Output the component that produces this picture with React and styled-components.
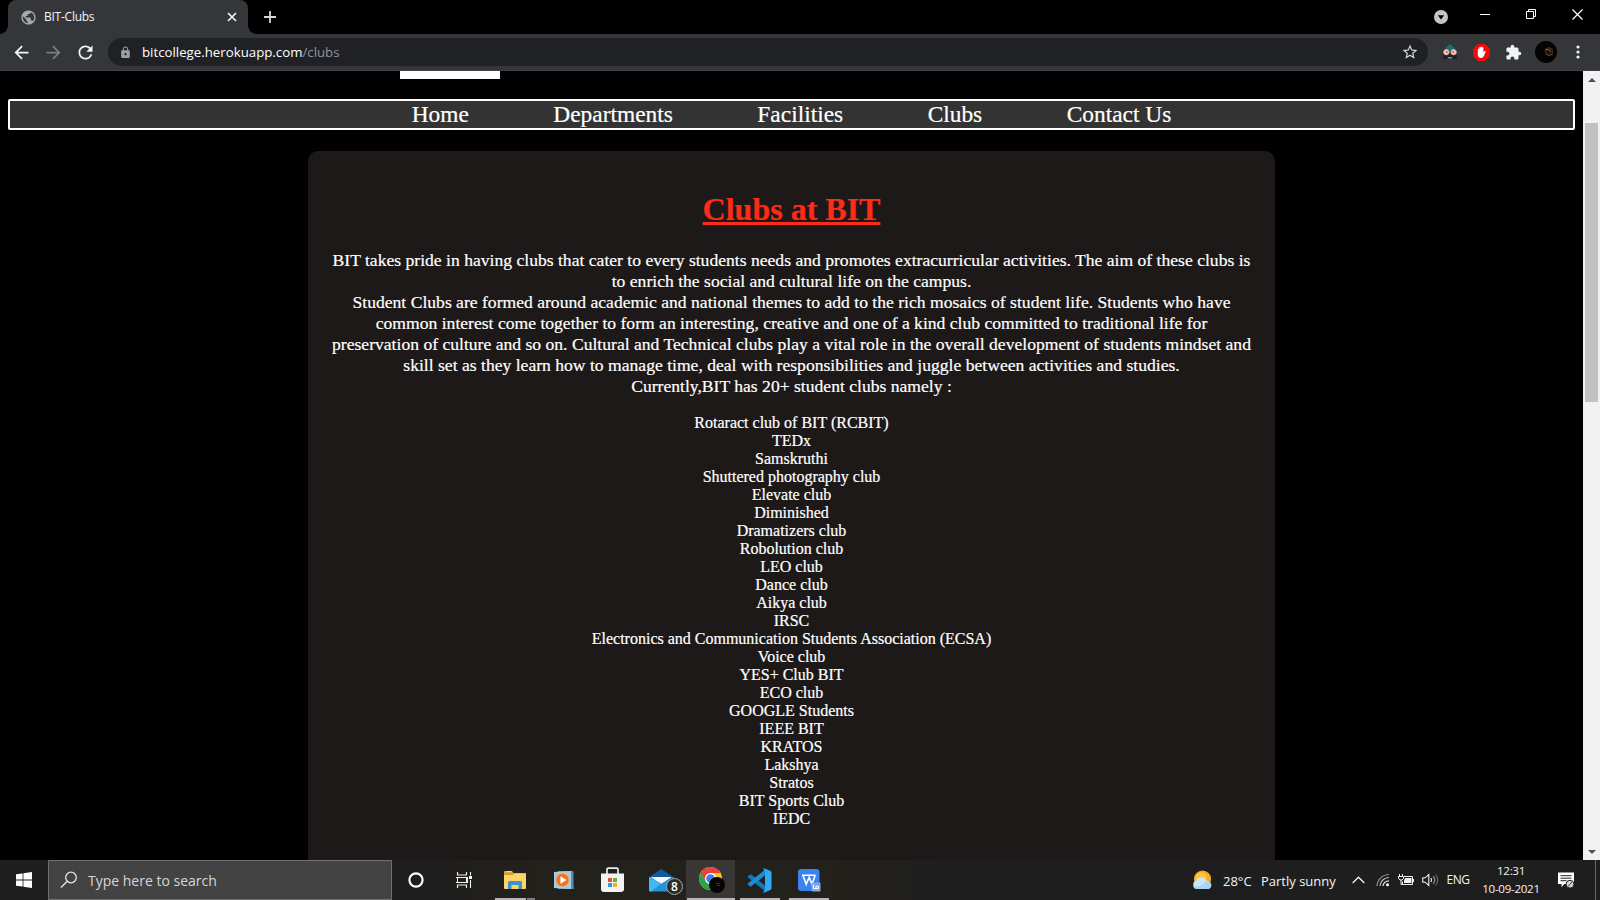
import React from "react";
import styled, { createGlobalStyle } from "styled-components";
import {
  MdArrowBack,
  MdArrowForward,
  MdRefresh,
  MdLock,
  MdStarBorder,
  MdExtension,
  MdPublic,
} from "react-icons/md";

const GlobalStyle = createGlobalStyle`
  html, body { margin: 0; background: #000; overflow: hidden; }
  *, *::before, *::after { box-sizing: border-box; }
  svg { display: block; flex: none; }
`;

const ui = `"Open Sans", "Noto Sans", sans-serif`;

const Screen = styled.div`
  display: flex;
  flex-direction: column;
  width: 1600px;
  height: 900px;
  background: #000;
  overflow: hidden;
`;

/* ---------- browser chrome ---------- */

const TabStrip = styled.div`
  display: flex;
  height: 34px;
  flex: none;
  padding-left: 8px;
  background: #000;
`;

const Tab = styled.div`
  position: relative;
  display: flex;
  align-items: center;
  width: 240px;
  height: 34px;
  padding: 0 9px 0 12px;
  border-radius: 8px 8px 0 0;
  background: #35363a;
  color: #a6a9ad;

  &::before,
  &::after {
    content: "";
    position: absolute;
    bottom: 0;
    width: 8px;
    height: 8px;
  }
  &::before {
    left: -8px;
    background: radial-gradient(circle at 0 0, #000 7.5px, #35363a 8px);
  }
  &::after {
    right: -8px;
    background: radial-gradient(circle at 100% 0, #000 7.5px, #35363a 8px);
  }
`;

const TabTitle = styled.span`
  flex: 1;
  margin-left: 7px;
  padding-bottom: 1px;
  color: #f4f5f6;
  font: 12px/17px ${ui};
  letter-spacing: -0.25px;
`;

const NewTab = styled.div`
  display: flex;
  align-items: center;
  justify-content: center;
  width: 28px;
  margin-left: 8px;
`;

const WindowControls = styled.div`
  display: flex;
  margin-left: auto;
`;

const ControlButton = styled.div`
  display: flex;
  justify-content: center;
  width: ${(p) => p.$width || 46}px;
  padding-top: ${(p) => p.$top || 9}px;
`;

const Toolbar = styled.div`
  display: flex;
  align-items: center;
  height: 37px;
  flex: none;
  padding: 0 6px;
  background: #35363a;
  border-bottom: 1px solid #414246;
`;

const ToolButton = styled.div`
  display: flex;
  align-items: center;
  justify-content: center;
  width: 32px;
  height: 32px;
  padding-right: 1px;
  color: ${(p) => p.$color || "#f1f3f4"};
`;

const Omnibox = styled.div`
  display: flex;
  align-items: center;
  width: 1320px;
  height: 28px;
  margin: 0 6px;
  padding: 0 9px 0 11px;
  border-radius: 14px;
  background: #202124;
  color: #9aa0a6;
`;

const Url = styled.span`
  flex: 1;
  margin-left: 10px;
  font: 13.25px/20px ${ui};
  color: #8f9397;
  b {
    font-weight: 400;
    color: #fff;
  }
`;

/* ---------- page ---------- */

const Viewport = styled.div`
  display: flex;
  height: 789px;
  flex: none;
  overflow: hidden;
`;

const Page = styled.main`
  display: flex;
  flex-direction: column;
  width: 1583px;
  padding: 0 8px;
  color: #fff;
  font-family: "Liberation Serif", "Times New Roman", serif;
  -webkit-text-stroke: 0.2px currentColor;
`;

const LogoEdge = styled.div`
  width: 100px;
  height: 8px;
  flex: none;
  margin-left: 392px;
  background: #fff;
`;

const NavBar = styled.nav`
  display: flex;
  justify-content: center;
  gap: 84.5px;
  height: 31px;
  flex: none;
  margin-top: 20px;
  border: 2px solid #fff;
  border-radius: 2px;
  background: #333;
`;

const NavLink = styled.a`
  color: #fff;
  font-size: 23.4px;
  line-height: 27px;
`;

const Card = styled.section`
  width: 967px;
  flex: 1;
  margin: 21px auto 0;
  padding: 40px 20px 0;
  border-radius: 10px 10px 0 0;
  background: #1d1918;
  text-align: center;
`;

const Title = styled.h1`
  margin: 0;
  color: #ff2a17;
  font-size: 32px;
  line-height: 37px;
  text-decoration: underline;
  text-decoration-thickness: 3px;
  text-underline-offset: 2px;
  text-decoration-skip-ink: none;
`;

const Intro = styled.div`
  margin: 22px 0 17px;
  font-size: 17.6px;
  line-height: 21px;
  white-space: nowrap;
`;

const ClubList = styled.ul`
  margin: 0;
  padding: 0;
  list-style: none;
  font-size: 16px;
  line-height: 18px;
`;

const Scrollbar = styled.div`
  display: flex;
  flex-direction: column;
  align-items: center;
  width: 17px;
  background: #f1f1f1;
`;

const ScrollArrow = styled.div`
  display: flex;
  align-items: center;
  justify-content: center;
  width: 17px;
  height: 17px;
`;

const ScrollTrack = styled.div`
  flex: 1;
  padding-top: 35px;
`;

const ScrollThumb = styled.div`
  width: 13px;
  height: 279px;
  background: #c1c1c1;
`;

/* ---------- taskbar ---------- */

const Taskbar = styled.footer`
  display: flex;
  height: 40px;
  flex: none;
  background: linear-gradient(90deg, #1f1f20 0, #1f1e1e 440px, #23211b 540px, #23211b 820px, #1e1e1f 960px);
  color: #f4f4f4;
  font-family: ${ui};
`;

const TaskCell = styled.div`
  display: flex;
  align-items: center;
  justify-content: center;
  width: ${(p) => p.$width || 48}px;
`;

const SearchBox = styled.div`
  display: flex;
  align-items: center;
  width: 344px;
  padding-left: 11px;
  border: 1px solid #707070;
  background: #434343;
  color: #d6d6d6;
  font-size: 14px;
  line-height: 20px;
`;

const SearchText = styled.span`
  margin-left: 10px;
  padding-top: 2px;
`;

const Apps = styled.div`
  display: flex;
  margin-left: 2px;
`;

const AppButton = styled.div`
  position: relative;
  display: flex;
  align-items: center;
  justify-content: center;
  width: 49px;
  padding-left: ${(p) => p.$nudge || 0}px;
  background: ${(p) => (p.$active ? "#383735" : "transparent")};
`;

const RunningMark = styled.i`
  position: absolute;
  left: ${(p) => p.$left}px;
  bottom: 0;
  width: ${(p) => p.$width}px;
  height: 2px;
  background: ${(p) => (p.$dim ? "#7f7c7d" : "#b9b5b6")};
`;

const MailCount = styled.span`
  position: absolute;
  left: 29px;
  top: 18px;
  width: 17px;
  height: 17px;
  border: 1px solid #a9a9a9;
  border-radius: 50%;
  background: #2b2b2b;
  color: #fff;
  font-size: 12px;
  font-weight: 600;
  line-height: 15px;
  text-align: center;
`;

const Tray = styled.div`
  display: flex;
  align-items: center;
  margin-left: auto;
`;

const Weather = styled.div`
  display: flex;
  align-items: center;
  width: 153px;
  font-size: 13px;
  line-height: 18px;
`;

const Temp = styled.span`
  width: 38px;
  margin-left: 10px;
  padding-top: 2px;
`;

const Condition = styled.span`
  padding-top: 2px;
`;

const Language = styled.span`
  width: 32px;
  font-size: 12px;
  line-height: 16px;
  letter-spacing: -0.5px;
  text-align: center;
`;

const Clock = styled.div`
  width: 74px;
  font-size: 11.6px;
  line-height: 18px;
  letter-spacing: -0.3px;
  text-align: center;
`;

const DesktopEdge = styled.div`
  align-self: stretch;
  width: 15px;
  background: linear-gradient(#6a6a6a, #6a6a6a) 10px 0 / 1px 100% no-repeat;
`;

/* ---------- icons ---------- */

const CloseTabIcon = () => (
  <svg width="14" height="14" stroke="#f1f3f4" strokeWidth="1.7">
    <path d="M3 3l8 8M11 3l-8 8" />
  </svg>
);

const PlusIcon = () => (
  <svg width="14" height="14" stroke="#d5d7da" strokeWidth="1.8">
    <path d="M7 1v12M1 7h12" />
  </svg>
);

const TabSearchIcon = () => (
  <svg width="14" height="14">
    <circle cx="7" cy="7" r="7" fill="#c4c5c6" />
    <path d="M3.8 5.2h6.4L7 9.4z" fill="#000" />
  </svg>
);

const MinimizeIcon = () => (
  <svg width="10" height="11" fill="#fff">
    <path d="M0 5h10v1H0z" />
  </svg>
);

const RestoreIcon = () => (
  <svg width="11" height="11" fill="none" stroke="#fff">
    <path d="M.5 2.5h7v7h-7zM2.5 2.5v-2h7v7h-2" />
  </svg>
);

const CloseIcon = () => (
  <svg width="11" height="11" stroke="#fff" strokeWidth="1.2">
    <path d="M.5.5l10 10M10.5.5l-10 10" />
  </svg>
);

const OwlIcon = () => (
  <svg width="16" height="16">
    <path d="M8 0l4 3.6 1 3.400H3l1-3.400z" fill="#16717c" />
    <path d="M2 9h12l1 6H1z" fill="#15232c" />
    <path d="M5.500 13h5l-.6 1.600H6.100z" fill="#7b8f98" />
    <circle cx="4.400" cy="8.200" r="2.700" fill="#f8ebe4" stroke="#d98f80" strokeWidth="1" />
    <circle cx="11.600" cy="8.200" r="2.700" fill="#f8ebe4" stroke="#d98f80" strokeWidth="1" />
    <circle cx="4.700" cy="8.200" r="1.100" fill="#d4492f" />
    <circle cx="11.300" cy="8.200" r="1.100" fill="#d4492f" />
  </svg>
);

const BlockerIcon = () => (
  <svg width="17" height="17">
    <path d="M5 0h7l5 5v7l-5 5H5l-5-5V5z" fill="#f50a0a" />
    <path
      d="M4.800 8.800V5.200a.7.7 0 011.400 0V3.800a.7.700 0 011.400 0v-.6a.7.700 0 011.400 0v.6a.7.700 0 011.400 0v4.600l1-1.200c.600-.6 1.600-.1 1.200.7l-1.500 3.600c-.6 1.500-1.600 2.500-3.100 2.500-2 0-3.200-1.400-3.200-3.200z"
      fill="#fff"
    />
  </svg>
);

const AvatarIcon = () => (
  <svg width="22" height="22">
    <circle cx="11" cy="11" r="11" fill="#050403" />
    <circle cx="14" cy="10.500" r="3.800" fill="#20150e" stroke="#4d3422" strokeWidth="1" />
    <path d="M10.500 8.500l3.500.4 2 1.500" stroke="#94602f" fill="none" />
    <path d="M11 13l3 1.500 3.500-1" stroke="#39413f" fill="none" />
  </svg>
);

const MenuDotsIcon = () => (
  <svg width="4" height="14" fill="#f1f3f4">
    <circle cx="2" cy="2" r="1.600" />
    <circle cx="2" cy="7" r="1.600" />
    <circle cx="2" cy="12" r="1.600" />
  </svg>
);

const ScrollUpIcon = () => (
  <svg width="8" height="4" fill="#505050">
    <path d="M0 4l4-4 4 4z" />
  </svg>
);

const ScrollDownIcon = () => (
  <svg width="8" height="4" fill="#505050">
    <path d="M0 0l4 4 4-4z" />
  </svg>
);

const WindowsIcon = () => (
  <svg width="16" height="16" fill="#fff">
    <path d="M0 2.300l6.600-.9v6.200H0zM7.400 1.250L16 0v7.600H7.400zM0 8.400h6.600v6.200L0 13.700zM7.400 8.400H16V16l-8.600-1.200z" />
  </svg>
);

const SearchIcon = () => (
  <svg width="18" height="18" fill="none" stroke="#e6e6e6" strokeWidth="1.300">
    <circle cx="11" cy="6.500" r="5.300" />
    <path d="M7.200 10.300L1 16.500" />
  </svg>
);

const CortanaIcon = () => (
  <svg width="16" height="16" fill="none" stroke="#fff" strokeWidth="2.100">
    <circle cx="8" cy="8" r="6.600" />
  </svg>
);

const TaskViewIcon = () => (
  <svg width="17" height="16" fill="none" stroke="#f2f2f2" strokeWidth="1.100">
    <path d="M1.500 0v3h9V0M1.500 16v-3h9v3M0 5.500h11.500v5H0M1.500 5.500v5M10.500 5.500v5M14.500 0v3.500M14.500 8v8" />
    <path d="M13 4h3v3h-3z" fill="#f2f2f2" stroke="none" />
  </svg>
);

const ExplorerIcon = () => (
  <svg width="22" height="20">
    <path d="M0 1.500Q0 1 .6 1H8l1.500 2H21q1 0 1 1v3H0z" fill="#d99f25" />
    <path d="M2 1.700h5.500" stroke="#f7e3a5" />
    <path d="M0 5h9l1.500-1.500H22V18q0 1-1 1H1q-1 0-1-1z" fill="#fbd568" />
    <path d="M4 19v-6.500Q4 11 5.500 11h11q1.500 0 1.500 1.500V19h-3.500v-4h-7v4z" fill="#3f8fd3" />
  </svg>
);

const MediaPlayerIcon = () => (
  <svg width="20" height="20">
    <path d="M4 1h15v15l1 3H4z" fill="#5f9fc4" />
    <path d="M0 2l17-1v18L0 18z" fill="#a9cbdc" />
    <path d="M17 1l2.500 1v17L17 19z" fill="#4d8fb8" />
    <circle cx="8.500" cy="10" r="6.700" fill="#e9762b" stroke="#f4b586" strokeWidth=".8" />
    <path d="M6.500 6.200l6 3.800-6 3.800z" fill="#fff" />
  </svg>
);

const StoreIcon = () => (
  <svg width="24" height="26">
    <path d="M6 9V2.500Q6 1.200 7.300 1.200h8.400Q17 1.200 17 2.500V9" fill="none" stroke="#eee" strokeWidth="1.700" />
    <path d="M0 6.500h23V22q0 3-3 3H3q-3 0-3-3z" fill="#f3f3f3" />
    <path d="M7 11h4v4H7z" fill="#e8502f" />
    <path d="M12 11h4v4h-4z" fill="#7aac2c" />
    <path d="M7 16h4v4H7z" fill="#2f9be0" />
    <path d="M12 16h4v4h-4z" fill="#efb325" />
  </svg>
);

const MailIcon = () => (
  <svg width="25" height="23">
    <path d="M0 8L12.200 0l12.300 8v4H0z" fill="#14599c" />
    <path d="M2 8h20.500L12.200 15.500z" fill="#f5f8fa" />
    <path d="M0 8l12.200 6.500L24.500 8v13q0 1.500-1.500 1.500H1.500Q0 22.500 0 21z" fill="#2394dc" />
    <path d="M2 8h20.500L12.200 14.500z" fill="#f5f8fa" />
    <path d="M0 8l12.200 6.500L2 22.500h-.5Q0 22.500 0 21z" fill="#45b8f0" />
  </svg>
);

const ChromeIcon = () => (
  <svg width="26" height="26">
    <circle cx="11.500" cy="11.500" r="11.500" fill="#f6c81f" />
    <path d="M1.500 5.800A11.500 11.500 0 0121.500 6H11.500L6.300 14.300z" fill="#e2453c" />
    <path d="M1.500 5.800a11.500 11.500 0 009.800 17.200l4.700-8.500-9.400-.2z" fill="#2da14e" />
    <circle cx="11.500" cy="11.500" r="5.500" fill="#fff" />
    <circle cx="11.500" cy="11.500" r="4.300" fill="#3c7fe8" />
    <circle cx="18" cy="18" r="8" fill="#080605" />
    <path d="M17 16.500h3.500M18 18.500h3" stroke="#4a2f1d" />
  </svg>
);

const CodeIcon = () => (
  <svg width="25" height="25">
    <path d="M1 8.200l2-1.600q.6-.4 1.200 0L18.500 18v5.500L1 9.500q-.7-.7 0-1.300z" fill="#1478bd" />
    <path d="M1 16.600l2 1.700q.6.400 1.200 0L18.500 7V1.200L1 15.300q-.7.700 0 1.300z" fill="#1b8bd6" />
    <path d="M17.800.4L23.500 3q1 .5 1 1.500v15.800q0 1-1 1.500l-5.700 2.800q-1 .3-1.600-.6L18 22V3l-1.800-2q.6-.9 1.600-.6z" fill="#2fa9f3" />
  </svg>
);

const WpsIcon = () => (
  <svg width="23" height="23">
    <rect width="21.500" height="22" rx="3" fill="#3b82ee" />
    <path d="M4 6.200h13.500M5 6.500l3.200 8.800 3-7 2.800 7 3.200-9" fill="none" stroke="#fff" strokeWidth="1.600" />
    <rect x="13.500" y="13.500" width="9" height="9" rx="1" fill="#7ba8ee" />
    <path d="M15.500 16v3.500h5V17.300h-2.500v2" fill="none" stroke="#fff" />
  </svg>
);

const WeatherIcon = () => (
  <svg width="21" height="20">
    <circle cx="10.500" cy="9" r="8.600" fill="#f8ae1c" />
    <circle cx="9" cy="8" r="5.500" fill="#fcc540" />
    <path d="M4.500 19a4.500 4.500 0 01-.2-8.600 6 6 0 0110.700.6 4.200 4.200 0 011.500 8z" fill="#c9e5fa" />
    <path d="M4.500 19a4.500 4.500 0 01-3.500-2.800q8 1 11-3.200 3-2.500 6.500-.6a4.200 4.200 0 01-2 6.600z" fill="#a7d3f5" />
  </svg>
);

const ChevronUpIcon = () => (
  <svg width="13" height="8" fill="none" stroke="#f2f2f2" strokeWidth="1.300">
    <path d="M.7 7L6.500 1.200 12.300 7" />
  </svg>
);

const WifiIcon = () => (
  <svg width="14" height="14" fill="none" stroke="#8f8f8f" strokeWidth="1.200">
    <path d="M1 13A12 12 0 0113 1.500" />
    <path d="M4 13A9 9 0 0113 4.500" stroke="#c4c4c4" />
    <path d="M7 13a6 6 0 016-5.200" stroke="#e8e8e8" />
    <circle cx="11.500" cy="11.800" r="1.500" fill="#fff" stroke="none" />
  </svg>
);

const BatteryIcon = () => (
  <svg width="17" height="13" fill="none" stroke="#f2f2f2" strokeWidth="1">
    <path d="M6 2.500h8.500v8H4.500V7.500M15.500 5v3" />
    <path d="M7 4h6.500v5H6V6.500z" fill="#f2f2f2" stroke="none" />
    <path d="M1.500 0v2.500M4.500 0v2.500M.5 2.500h5v2L4 6H2L.5 4.500zM3 6v4.500h1.500" />
  </svg>
);

const SpeakerIcon = () => (
  <svg width="17" height="14" fill="none" stroke="#f2f2f2" strokeWidth="1.100">
    <path d="M.8 4.800h2.400L6.800 1.500v11L3.200 9.200H.8z" />
    <path d="M9 5q1.300 2 0 4" />
    <path d="M11.200 3.200q3 3.800 0 7.600" stroke="#9b9b9b" />
    <path d="M13.500 1.500q4.500 5.500 0 11" stroke="#6d6d6d" />
  </svg>
);

const NotificationIcon = () => (
  <svg width="17" height="17">
    <path d="M0 .5h16v11.500H6.500L3.500 15v-3H0z" fill="#fff" />
    <path d="M2.500 3.700h11M2.500 6.200h11M2.500 8.700h6" stroke="#222" />
    <circle cx="12" cy="12.200" r="3.900" fill="#d8d8d8" stroke="#1f1f1f" />
    <path d="M10 14.500l4-4.500" stroke="#333" />
  </svg>
);

/* ---------- content ---------- */

const links = ["Home", "Departments", "Facilities", "Clubs", "Contact Us"];

const intro = [
  "BIT takes pride in having clubs that cater to every students needs and promotes extracurricular activities. The aim of these clubs is",
  "to enrich the social and cultural life on the campus.",
  "Student Clubs are formed around academic and national themes to add to the rich mosaics of student life. Students who have",
  "common interest come together to form an interesting, creative and one of a kind club committed to traditional life for",
  "preservation of culture and so on. Cultural and Technical clubs play a vital role in the overall development of students mindset and",
  "skill set as they learn how to manage time, deal with responsibilities and juggle between activities and studies.",
  "Currently,BIT has 20+ student clubs namely :",
];

const clubs = [
  "Rotaract club of BIT (RCBIT)",
  "TEDx",
  "Samskruthi",
  "Shuttered photography club",
  "Elevate club",
  "Diminished",
  "Dramatizers club",
  "Robolution club",
  "LEO club",
  "Dance club",
  "Aikya club",
  "IRSC",
  "Electronics and Communication Students Association (ECSA)",
  "Voice club",
  "YES+ Club BIT",
  "ECO club",
  "GOOGLE Students",
  "IEEE BIT",
  "KRATOS",
  "Lakshya",
  "Stratos",
  "BIT Sports Club",
  "IEDC",
];

export default function App() {
  return (
    <Screen>
      <GlobalStyle />
      <TabStrip>
        <Tab>
          <MdPublic size={17} />
          <TabTitle>BIT-Clubs</TabTitle>
          <CloseTabIcon />
        </Tab>
        <NewTab>
          <PlusIcon />
        </NewTab>
        <WindowControls>
          <ControlButton $width={42} $top={10}>
            <TabSearchIcon />
          </ControlButton>
          <ControlButton>
            <MinimizeIcon />
          </ControlButton>
          <ControlButton>
            <RestoreIcon />
          </ControlButton>
          <ControlButton>
            <CloseIcon />
          </ControlButton>
        </WindowControls>
      </TabStrip>

      <Toolbar>
        <ToolButton>
          <MdArrowBack size={21} />
        </ToolButton>
        <ToolButton $color="#7b7d81">
          <MdArrowForward size={21} />
        </ToolButton>
        <ToolButton>
          <MdRefresh size={21} />
        </ToolButton>
        <Omnibox>
          <MdLock size={13} />
          <Url>
            <b>bitcollege.herokuapp.com</b>/clubs
          </Url>
          <MdStarBorder size={18} color="#d5d7da" />
        </Omnibox>
        <ToolButton>
          <OwlIcon />
        </ToolButton>
        <ToolButton>
          <BlockerIcon />
        </ToolButton>
        <ToolButton>
          <MdExtension size={17} />
        </ToolButton>
        <ToolButton>
          <AvatarIcon />
        </ToolButton>
        <ToolButton>
          <MenuDotsIcon />
        </ToolButton>
      </Toolbar>

      <Viewport>
        <Page>
          <LogoEdge />
          <NavBar>
            {links.map((link) => (
              <NavLink key={link}>{link}</NavLink>
            ))}
          </NavBar>
          <Card>
            <Title>Clubs at BIT</Title>
            <Intro>
              {intro.map((line) => (
                <div key={line}>{line}</div>
              ))}
            </Intro>
            <ClubList>
              {clubs.map((club) => (
                <li key={club}>{club}</li>
              ))}
            </ClubList>
          </Card>
        </Page>
        <Scrollbar>
          <ScrollArrow>
            <ScrollUpIcon />
          </ScrollArrow>
          <ScrollTrack>
            <ScrollThumb />
          </ScrollTrack>
          <ScrollArrow>
            <ScrollDownIcon />
          </ScrollArrow>
        </Scrollbar>
      </Viewport>

      <Taskbar>
        <TaskCell>
          <WindowsIcon />
        </TaskCell>
        <SearchBox>
          <SearchIcon />
          <SearchText>Type here to search</SearchText>
        </SearchBox>
        <TaskCell>
          <CortanaIcon />
        </TaskCell>
        <TaskCell>
          <TaskViewIcon />
        </TaskCell>
        <Apps>
          <AppButton>
            <ExplorerIcon />
            <RunningMark $left={5} $width={31} />
            <RunningMark $left={37} $width={8} $dim />
          </AppButton>
          <AppButton>
            <MediaPlayerIcon />
          </AppButton>
          <AppButton>
            <StoreIcon />
          </AppButton>
          <AppButton>
            <MailIcon />
            <MailCount>8</MailCount>
          </AppButton>
          <AppButton $active $nudge={3}>
            <ChromeIcon />
            <RunningMark $left={1} $width={48} />
          </AppButton>
          <AppButton>
            <CodeIcon />
            <RunningMark $left={5} $width={40} />
          </AppButton>
          <AppButton $nudge={2}>
            <WpsIcon />
            <RunningMark $left={5} $width={40} />
          </AppButton>
        </Apps>
        <Tray>
          <Weather>
            <WeatherIcon />
            <Temp>28°C</Temp>
            <Condition>Partly sunny</Condition>
          </Weather>
          <TaskCell $width={26}>
            <ChevronUpIcon />
          </TaskCell>
          <TaskCell $width={23}>
            <WifiIcon />
          </TaskCell>
          <TaskCell $width={24}>
            <BatteryIcon />
          </TaskCell>
          <TaskCell $width={24}>
            <SpeakerIcon />
          </TaskCell>
          <Language>ENG</Language>
          <Clock>
            <div>12:31</div>
            <div>10-09-2021</div>
          </Clock>
          <TaskCell $width={37}>
            <NotificationIcon />
          </TaskCell>
          <DesktopEdge />
        </Tray>
      </Taskbar>
    </Screen>
  );
}
